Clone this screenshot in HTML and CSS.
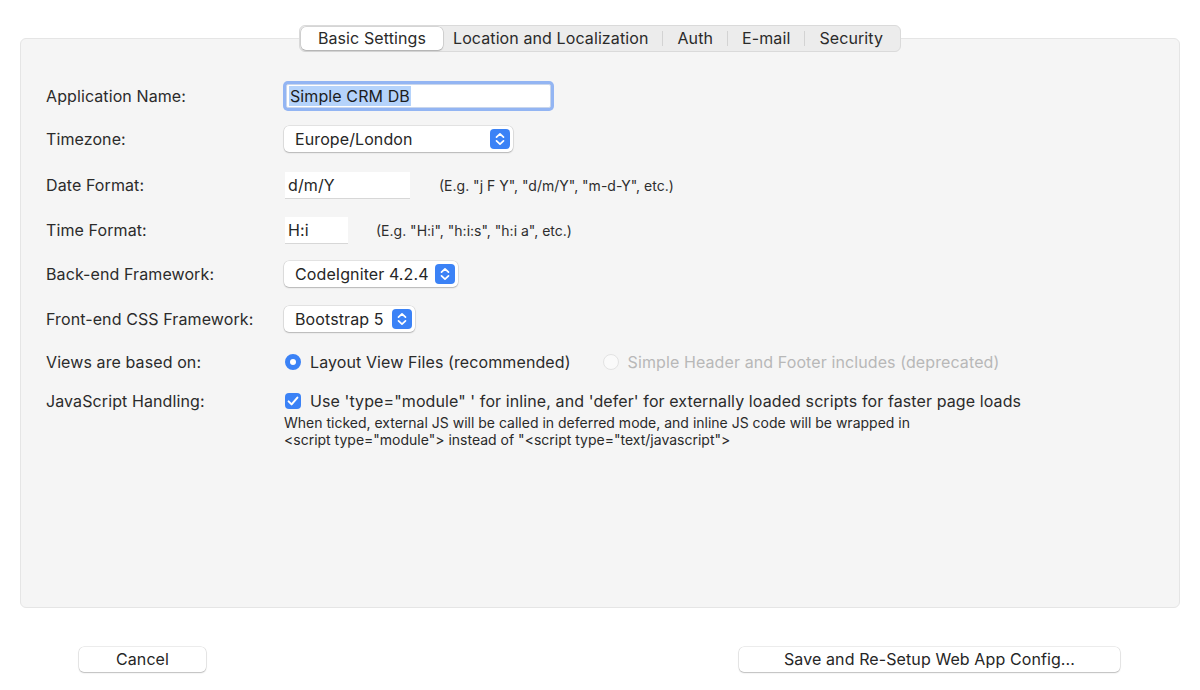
FILE: index.html
```html
<!DOCTYPE html>
<html>
<head>
<meta charset="utf-8">
<link rel="stylesheet" href="styles.css">
</head>
<body>
<div class="tabs-wrap">
  <div class="tabs">
    <div class="tab active">Basic Settings</div>
    <div class="tab after-active">Location and Localization</div>
    <div class="sep"></div>
    <div class="tab">Auth</div>
    <div class="sep"></div>
    <div class="tab">E-mail</div>
    <div class="sep"></div>
    <div class="tab last">Security</div>
  </div>
</div>
<div class="panel">
  <div class="form">
    <div class="label">Application Name:</div>
    <div class="field"><div class="text-input focused"><span class="sel">Simple CRM DB</span></div></div>

    <div class="label">Timezone:</div>
    <div class="field"><div class="select w-tz"><span>Europe/London</span><span class="stepper"><svg width="20" height="20" viewBox="0 0 20 20"><path d="M6.5 8.2 L10 4.8 L13.5 8.2 M6.5 11.8 L10 15.2 L13.5 11.8" fill="none" stroke="#fff" stroke-width="1.7" stroke-linecap="round" stroke-linejoin="round"/></svg></span></div></div>

    <div class="label">Date Format:</div>
    <div class="field"><div class="plain-input w-date">d/m/Y</div><span class="hint hint-date">(E.g. "j F Y", "d/m/Y", "m-d-Y", etc.)</span></div>

    <div class="label">Time Format:</div>
    <div class="field"><div class="plain-input w-time">H:i</div><span class="hint hint-time">(E.g. "H:i", "h:i:s", "h:i a", etc.)</span></div>

    <div class="label">Back-end Framework:</div>
    <div class="field"><div class="select w-be"><span>CodeIgniter 4.2.4</span><span class="stepper"><svg width="20" height="20" viewBox="0 0 20 20"><path d="M6.5 8.2 L10 4.8 L13.5 8.2 M6.5 11.8 L10 15.2 L13.5 11.8" fill="none" stroke="#fff" stroke-width="1.7" stroke-linecap="round" stroke-linejoin="round"/></svg></span></div></div>

    <div class="label">Front-end CSS Framework:</div>
    <div class="field"><div class="select w-fe"><span>Bootstrap 5</span><span class="stepper"><svg width="20" height="20" viewBox="0 0 20 20"><path d="M6.5 8.2 L10 4.8 L13.5 8.2 M6.5 11.8 L10 15.2 L13.5 11.8" fill="none" stroke="#fff" stroke-width="1.7" stroke-linecap="round" stroke-linejoin="round"/></svg></span></div></div>

    <div class="label">Views are based on:</div>
    <div class="field">
      <span class="radio on"></span><span class="opt">Layout View Files (recommended)</span>
      <span class="radio off"></span><span class="opt disabled">Simple Header and Footer includes (deprecated)</span>
    </div>

    <div class="label top">JavaScript Handling:</div>
    <div class="field top col">
      <div class="check-line"><span class="checkbox"><svg width="16" height="16" viewBox="0 0 16 16"><path d="M3.6 8.4 L6.6 11.4 L12.4 4.6" fill="none" stroke="#fff" stroke-width="2" stroke-linecap="round" stroke-linejoin="round"/></svg></span><span class="opt">Use 'type="module" ' for inline, and 'defer' for externally loaded scripts for faster page loads</span></div>
      <div class="help">When ticked, external JS will be called in deferred mode, and inline JS code will be wrapped in<br>&lt;script type="module"&gt; instead of "&lt;script type="text/javascript"&gt;</div>
    </div>
  </div>
</div>
<div class="buttons">
  <div class="btn btn-cancel">Cancel</div>
  <div class="btn btn-save">Save and Re-Setup Web App Config...</div>
</div>
</body>
</html>
```
FILE: styles.css
```css
html, body {
  margin: 0;
  padding: 0;
  background: #ffffff;
  font-family: Inter, "Noto Sans", "Liberation Sans", sans-serif;
  color: #262626;
  font-size: 16px;
  letter-spacing: 0.1px;
}
body {
  width: 1200px;
  height: 690px;
  overflow: hidden;
}
.tabs-wrap {
  display: flex;
  justify-content: center;
  padding-top: 25px;
  position: relative;
  z-index: 2;
}
.tabs {
  display: flex;
  align-items: center;
  height: 25px;
  padding: 0 1px;
  background: #ececec;
  border: 1px solid #dadada;
  border-radius: 6px;
}
.tab {
  height: 23px;
  line-height: 23px;
  padding: 0 14px;
  font-size: 16px;
  color: #2a2a2a;
  white-space: nowrap;
}
.tab.active {
  padding: 0 17px;
  background: #ffffff;
  border-radius: 5px;
  box-shadow: 0 0 0 0.5px rgba(0,0,0,0.18), 0 1px 1.5px rgba(0,0,0,0.18);
}
.tab.after-active { padding-left: 10px; }
.tab.last { padding-right: 16px; }
.sep {
  width: 1px;
  height: 15px;
  background: #d3d3d3;
}
.panel {
  margin: -14px 20px 0 20px;
  height: 570px;
  background: #f5f5f5;
  border: 1px solid #e5e5e5;
  border-radius: 6px;
  box-sizing: border-box;
  position: relative;
  z-index: 1;
}
.form {
  display: grid;
  grid-template-columns: 238px 1fr;
  grid-template-rows: 36px 50px 42px 48px 40px 50px 36px auto;
  padding: 39px 0 0 25px;
}
.label {
  display: flex;
  align-items: center;
  color: #2b2b2b;
}
.field {
  display: flex;
  align-items: center;
}
.label.top { align-items: flex-start; padding-top: 10px; line-height: 22px; }
.field.top { align-items: flex-start; padding-top: 10px; }
.field.col { flex-direction: column; }

.text-input.focused {
  width: 261px;
  height: 22px;
  background: #fff;
  border: 1px solid #c9d6ec;
  box-shadow: 0 0 0 3px #93b5f3;
  border-radius: 2px;
  margin-left: 2px;
  display: flex;
  align-items: center;
  padding-left: 2px;
  box-sizing: content-box;
}
.sel {
  background: #b5d3fb;
  line-height: 20px;
  padding: 0 1px;
  color: #1d1d1d;
}
.select {
  height: 26px;
  background: #fff;
  border-radius: 5px;
  box-shadow: 0 0 0 0.5px rgba(0,0,0,0.14), 0 1px 1.5px rgba(0,0,0,0.2);
  display: flex;
  align-items: center;
  justify-content: space-between;
  padding: 0 3px 0 11px;
  box-sizing: border-box;
}
.w-tz { width: 229px; }
.w-be { width: 174px; }
.w-fe { width: 131px; }
.stepper {
  width: 20px;
  height: 20px;
  background: #3b82f6;
  border-radius: 4px;
  display: flex;
}
.plain-input {
  height: 26px;
  line-height: 27px;
  background: #fff;
  padding-left: 3px;
  margin-left: 1px;
  box-sizing: border-box;
  box-shadow: 0 1px 0.5px rgba(0,0,0,0.12);
}
.w-date { width: 125px; }
.w-time { width: 63px; }
.hint {
  font-size: 14px;
  letter-spacing: 0;
  color: #2e2e2e;
}
.hint-date { margin-left: 29px; }
.hint-time { margin-left: 28px; }
.radio {
  width: 16px;
  height: 16px;
  border-radius: 50%;
  box-sizing: border-box;
  margin-left: 1px;
  flex: none;
}
.radio.on {
  background: #3b82f6;
  border: 5px solid #3b82f6;
  position: relative;
}
.radio.on::after {
  content: "";
  position: absolute;
  left: 0;
  top: 0;
  width: 6px;
  height: 6px;
  border-radius: 50%;
  background: #fff;
}
.radio.off {
  background: #fafafa;
  border: 1px solid #e3e3e3;
  margin-left: 32px;
}
.opt {
  margin-left: 9px;
  color: #2b2b2b;
  line-height: 22px;
  white-space: nowrap;
}
.opt.disabled { color: #b8b8b8; }
.check-line {
  display: flex;
  align-items: center;
  height: 22px;
}
.checkbox {
  width: 16px;
  height: 16px;
  margin-left: 1px;
  background: #3b82f6;
  border-radius: 4px;
  display: flex;
  flex: none;
}
.help {
  margin-top: 2px;
  font-size: 14px;
  letter-spacing: 0;
  line-height: 17px;
  color: #2a2a2a;
}
.buttons {
  display: flex;
  justify-content: space-between;
  padding: 39px 80px 0 79px;
}
.btn {
  height: 25px;
  line-height: 25px;
  text-align: center;
  background: #fff;
  border-radius: 5px;
  box-shadow: 0 0 0 0.5px rgba(0,0,0,0.14), 0 1px 1.5px rgba(0,0,0,0.2);
  color: #262626;
}
.btn-cancel { width: 127px; }
.btn-save { width: 381px; }
```
